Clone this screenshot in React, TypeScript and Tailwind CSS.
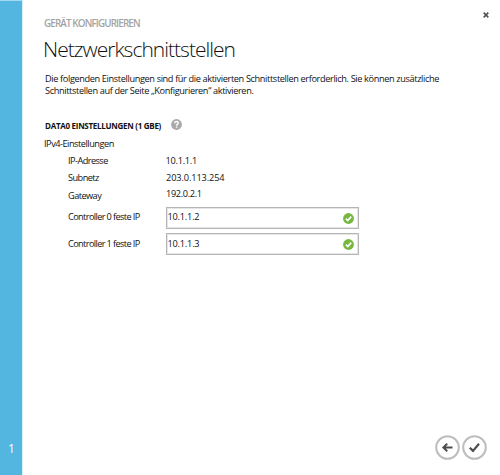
import type { ReactNode } from "react";

function Valid() {
  return (
    <svg className="mt-[2px] h-[11px] w-[11px] shrink-0" viewBox="0 0 11 11">
      <circle cx="5.5" cy="5.5" r="5.4" fill="#76b83f" />
      <path d="M2.9 5.6 4.8 7.5 8.2 3.6" fill="none" stroke="#fff" strokeWidth="1.6" />
    </svg>
  );
}

function Row({ label, children }: { label: ReactNode; children: ReactNode }) {
  return (
    <div className="flex h-[17.3px] items-center">
      <div className="w-[98px] pl-px tracking-[-0.55px]">{label}</div>
      {children}
    </div>
  );
}

function Field({ label, value }: { label: ReactNode; value: ReactNode }) {
  return (
    <div className="flex h-[22px] items-center">
      <div className="w-[99px] pl-px tracking-[-0.62px]">{label}</div>
      <div className="flex h-[22px] w-[193px] items-center justify-between border border-[#b5b5b5] pr-[4px] shadow-[inset_0_0_0_1px_#e6e6e6]">
        <div className="pl-[0.5px] tracking-[-0.2px]">{value}</div>
        <Valid />
      </div>
    </div>
  );
}

export default function App() {
  return (
    <div className="flex h-[475px] w-[500px] overflow-hidden bg-white font-['Open_Sans','Noto_Sans',sans-serif] text-[9.2px] leading-[12px] whitespace-nowrap text-[#111]">
      <aside className="flex w-[23px] shrink-0 flex-col justify-end border-t border-r border-t-[#a5d9ee] border-r-[#d9eff8] bg-[#53b6e0] pb-[18px] pl-[8px] text-[12px] leading-[16px] text-white">
        1
      </aside>
      <main className="flex flex-1 flex-col pl-[21px]">
        <div className="flex h-[35px] justify-between pr-[11px]">
          <div className="pt-[18px] text-[9.8px] font-semibold tracking-[-0.84px] text-[#a3a3a3]">GERÄT KONFIGURIEREN</div>
          <svg className="mt-[12px] h-[6px] w-[6px]" viewBox="0 0 6 6">
            <path d="M.7.7 5.3 5.3M5.3.7.7 5.3" stroke="#555" strokeWidth="1.7" />
          </svg>
        </div>
        <h1 className="-ml-px h-[38px] text-[21px] leading-[28px] font-light tracking-[-0.98px]">Netzwerkschnittstellen</h1>
        <p className="h-[46px] pl-px tracking-[-0.37px]">
          Die folgenden Einstellungen sind für die aktivierten Schnittstellen erforderlich. Sie können zusätzliche
          <br />
          Schnittstellen auf der Seite „Konfigurieren“ aktivieren.
        </p>
        <div className="flex h-[13px] items-center gap-[11px] pl-px">
          <h2 className="w-[115px] text-[8px] font-bold tracking-[-0.28px]">DATA0 EINSTELLUNGEN (1 GBE)</h2>
          <svg className="mb-[3px] h-[11px] w-[11px]" viewBox="0 0 11 11">
            <circle cx="5.5" cy="5.5" r="5.4" fill="#a9a9a9" />
            <path d="M3.7 4.2C3.7 2 7.3 2 7.3 4.1 7.3 5.2 5.6 5.2 5.6 6.7M5.6 7.5v1.3" fill="none" stroke="#fff" strokeWidth="1.4" />
          </svg>
        </div>
        <div className="mt-[6px] h-[14px] tracking-[-0.48px]">IPv4-Einstellungen</div>
        <div className="flex flex-col pl-[23px]">
          <Row label="IP-Adresse"><span className="pt-px pl-[0.5px] tracking-[-0.25px]">10.1.1.1</span></Row>
          <Row label="Subnetz"><span className="pl-px tracking-[-0.1px]">203.0.113.254</span></Row>
          <Row label={<div className="pt-[2px]">Gateway</div>}><span className="pb-[3px] pl-px tracking-[-0.35px]">192.0.2.1</span></Row>
          <div className="mt-[3px] flex flex-col gap-[4px]">
            <Field
              label={<div className="pb-[2px]">Controller 0 feste IP</div>}
              value={<div className="pb-[2px]">10.1.1.2</div>}
            />
            <Field label="Controller 1 feste IP" value="10.1.1.3" />
          </div>
        </div>
        <div className="mt-auto flex justify-end gap-[1.5px] pr-[13.5px] pb-[15.5px]">
          <svg className="h-[25px] w-[25px]" viewBox="0 0 25 25" fill="none">
            <circle cx="12.5" cy="12.5" r="11.3" stroke="#bdbdbd" strokeWidth="2" />
            <path d="M17.5 12.5H8.5M12.2 8.8 8.4 12.5l3.8 3.7" stroke="#4d4d4d" strokeWidth="2" />
          </svg>
          <svg className="h-[25px] w-[25px]" viewBox="0 0 25 25" fill="none">
            <circle cx="12.5" cy="12.5" r="11.3" stroke="#bdbdbd" strokeWidth="2" />
            <path d="M7.8 12.7 11 15.9 17 8.8" stroke="#4d4d4d" strokeWidth="2.2" />
          </svg>
        </div>
      </main>
    </div>
  );
}
